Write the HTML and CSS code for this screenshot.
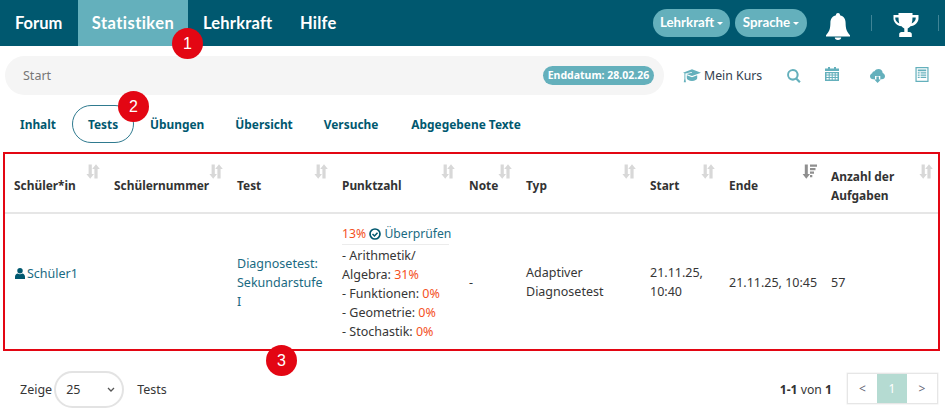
FILE: index.html
```html
<!DOCTYPE html>
<html lang="de">
<head>
<meta charset="utf-8">
<title>Tests</title>
<link rel="stylesheet" href="styles.css">
</head>
<body>
<svg class="defs" aria-hidden="true">
  <symbol id="sort" viewBox="0 0 15 15">
    <path d="M3.600 0.500h3.200v9.500h2.200l-3.800 4.700L1.400 10h2.200z"/>
    <path d="M9.400 5h-2.200l3.800-4.700L14.800 5h-2.200v9.500H9.400z"/>
  </symbol>
  <symbol id="sortdesc" viewBox="0 0 15 15">
    <path d="M2.800 0.500h3v9.500h2.200l-3.700 4.700L0.600 10h2.200z"/>
    <path d="M8 0.500h7v2.200H8zM8 4h5.500v2.200H8zM8 7.500h4v2.200H8zM8 11h2.300v2.200H8z"/>
  </symbol>
</svg>

<nav class="topbar">
  <a class="menu-item menu-first">Forum</a>
  <a class="menu-item active">Statistiken</a>
  <a class="menu-item menu-teacher">Lehrkraft</a>
  <a class="menu-item">Hilfe</a>
  <div class="top-right">
    <span class="pill pill-a">Lehrkraft<i class="caret"></i></span>
    <span class="pill pill-b">Sprache<i class="caret"></i></span>
    <svg class="bell" viewBox="0 0 24 27"><path d="M12 0a2 2 0 0 1 2 2.200c3.800.8 5.600 3.800 5.600 7.800 0 6 1.400 9.200 4.400 12.200v1.300H0v-1.300c3-3 4.400-6.200 4.400-12.200 0-4 1.800-7 5.600-7.800A2 2 0 0 1 12 0z"/><path d="M8.800 24.500h6.400a3.200 2.500 0 0 1-6.400 0z"/></svg>
    <i class="sep sep-a"></i>
    <svg class="trophy" viewBox="0 0 26 24"><path d="M6 0h14v2h6v3.500c0 4-3.800 7.300-8 7.800-.8 1-1.700 1.700-2.800 2.200v3.500H17c1.300 0 2.300 1 2.300 2.200V24H6.700v-2.800c0-1.200 1-2.200 2.300-2.200h2.800v-3.500c-1.100-.5-2-1.200-2.800-2.200-4.200-.5-8-3.800-8-7.800V2H6zM2.800 4.500v1c0 2 1.700 4 4 4.900C6.300 8.800 6 6.800 6 4.500zm20.400 0H20c0 2.300-.3 4.300-.8 5.900 2.300-.9 4-2.900 4-4.900z" transform="translate(-.5 0)"/></svg>
    <i class="sep"></i>
  </div>
</nav>

<div class="subbar">
  <div class="crumb">
    <span class="crumb-text">Start</span>
    <span class="badge">Enddatum: 28.02.26</span>
  </div>
  <div class="tools">
    <svg class="ic-cap" viewBox="0 0 19 14"><path d="M9.500 0L19 3.500 9.500 7 3.500 4.800l6-1.300-.2-.6-6.800 1.500V10l.6 3.500H.8L1.500 10V4.100L0 3.500z"/><path d="M4 6.200l5.500 2 5.500-2v3.300c0 1.500-2.500 2.800-5.500 2.800S4 11 4 9.500z"/></svg>
    <span class="my-course">Mein Kurs</span>
    <svg class="ic-search" viewBox="0 0 14 14"><path d="M5.800 0a5.800 5.800 0 0 1 4.700 9.200l3.200 3.200-1.600 1.600-3.200-3.200A5.800 5.800 0 1 1 5.800 0zm0 2a3.800 3.800 0 1 0 0 7.600 3.800 3.800 0 0 0 0-7.600z"/></svg>
    <svg class="ic-cal" viewBox="0 0 14 14"><path d="M3 0h2v1.500h4V0h2v1.500h3V4H0V1.500h3z"/><path fill-rule="evenodd" d="M0 5h14v9H0zM1.500 6.200v1.400h2.200V6.200zm3.200 0v1.400h2V6.200zm3 0v1.400h2V6.200zm3 0v1.400h1.800V6.200zM1.500 8.600V10h2.200V8.600zm3.200 0V10h2V8.600zm3 0V10h2V8.600zm3 0V10h1.800V8.600zM1.500 11v1.500h2.200V11zm3.200 0v1.500h2V11zm3 0v1.500h2V11zm3 0v1.500h1.800V11z"/></svg>
    <svg class="ic-cloud" viewBox="0 0 15 14"><path d="M8.500 0c2.300 0 4 1.700 4.200 3.900C14 4.400 15 5.600 15 7.200c0 1.800-1.400 3.100-3.200 3.100H10.300V7H5v3.300H3.200C1.400 10.300 0 8.900 0 7.200c0-1.400.9-2.500 2.200-3C2.400 3 3.400 2.200 4.500 2.300 5.300.9 6.800 0 8.500 0z"/><path d="M6.400 7.500h2.500v3h2L7.600 14l-3.300-3.500h2.100z"/></svg>
    <svg class="ic-list" viewBox="0 0 14 16"><path fill-rule="evenodd" d="M0 0h14v16H0zM1.300 1.300v13.400h11.400V1.300zM2.500 2.700h9v1.700h-9zM2.500 5.500h2v1.300h-2zm3 0h6v1.300h-6zM2.500 8h2v1.300h-2zm3 0h6v1.300h-6zm-3 2.500h2v1.300h-2zm3 0h6v1.300h-6z"/></svg>
  </div>
</div>

<div class="tabs">
  <a class="tab">Inhalt</a>
  <a class="tab tab-on">Tests</a>
  <a class="tab">Übungen</a>
  <a class="tab">Übersicht</a>
  <a class="tab">Versuche</a>
  <a class="tab tab-last">Abgegebene Texte</a>
</div>

<div class="box">
  <table class="grid">
    <colgroup>
      <col class="c1"><col class="c2"><col class="c3"><col class="c4"><col class="c5"><col class="c6"><col class="c7"><col class="c8"><col class="c9">
    </colgroup>
    <thead>
      <tr>
        <th>Schüler*in<svg class="sort"><use href="#sort"/></svg></th>
        <th>Schülernummer<svg class="sort"><use href="#sort"/></svg></th>
        <th>Test<svg class="sort"><use href="#sort"/></svg></th>
        <th>Punktzahl<svg class="sort"><use href="#sort"/></svg></th>
        <th>Note<svg class="sort"><use href="#sort"/></svg></th>
        <th>Typ<svg class="sort"><use href="#sort"/></svg></th>
        <th>Start<svg class="sort"><use href="#sort"/></svg></th>
        <th>Ende<svg class="sort sort-on"><use href="#sortdesc"/></svg></th>
        <th>Anzahl der Aufgaben<svg class="sort"><use href="#sort"/></svg></th>
      </tr>
    </thead>
    <tbody>
      <tr>
        <td><div class="student"><svg class="ic-user" viewBox="0 0 11 12"><circle cx="5.500" cy="3" r="3"/><path d="M0 12V9.500C0 7.500 1.500 6 3 6c.7.500 1.600.8 2.500.8S7.300 6.500 8 6c1.500 0 3 1.500 3 3.500V12z"/></svg><a class="link">Schüler1</a></div></td>
        <td></td>
        <td><a class="link">Diagnosetest: Sekundarstufe I</a></td>
        <td>
          <div class="score"><span class="pct">13%</span> <svg class="ic-check" viewBox="0 0 12 12"><circle cx="6" cy="6" r="5" fill="none" stroke="currentColor" stroke-width="1.700"/><path d="M3.500 6l2 2 3-3.300" fill="none" stroke="currentColor" stroke-width="1.500"/></svg> <a class="link">Überprüfen</a></div>
          <div class="parts">- Arithmetik/<br>Algebra: <span class="pct">31%</span><br>- Funktionen: <span class="pct">0%</span><br>- Geometrie: <span class="pct">0%</span><br>- Stochastik: <span class="pct">0%</span></div>
        </td>
        <td>-</td>
        <td>Adaptiver Diagnosetest</td>
        <td>21.11.25, 10:40</td>
        <td class="nowrap">21.11.25, 10:45</td>
        <td>57</td>
      </tr>
    </tbody>
  </table>
</div>

<div class="footer">
  <div class="length">
    <span>Zeige</span>
    <span class="select">25<svg class="chev" viewBox="0 0 8 5"><path d="M1 1l3 3 3-3" fill="none" stroke="currentColor" stroke-width="1.300"/></svg></span>
    <span class="length-unit">Tests</span>
  </div>
  <div class="paging">
    <span class="count"><b>1-1</b> von <b>1</b></span>
    <div class="pages">
      <span class="page page-first">&lt;</span>
      <span class="page page-on">1</span>
      <span class="page">&gt;</span>
    </div>
  </div>
</div>

<span class="mark mark-1">1</span>
<span class="mark mark-2">2</span>
<span class="mark mark-3">3</span>
</body>
</html>
```

FILE: styles.css
```css
* { box-sizing: border-box; }
html, body { margin: 0; padding: 0; }
body {
  width: 945px;
  height: 413px;
  overflow: hidden;
  position: relative;
  background: #fff;
  color: #363636;
  font-family: "Noto Sans", "Open Sans", sans-serif;
  font-size: 12.500px;
  line-height: 19px;
}
.defs { position: absolute; width: 0; height: 0; }

.topbar {
  display: flex;
  height: 46px;
  background: #00586f;
  align-items: stretch;
}
.menu-item {
  display: flex;
  align-items: center;
  padding: 1px 15px 0;
  height: 46px;
  color: #fff;
  font-family: "Lato", sans-serif;
  font-weight: 700;
  font-size: 16.500px;
  letter-spacing: .2px;
}
.menu-first { width: 78px; letter-spacing: 0; }
.menu-teacher { width: 97px; }
.menu-item.active { background: #64b0bc; width: 110px; justify-content: center; padding: 1px 0 0; letter-spacing: .45px; }
.top-right { margin-left: auto; display: flex; align-items: center; padding-right: 6px; }
.pill {
  display: flex;
  align-items: center;
  justify-content: center;
  height: 28px;
  margin-top: -1px;
  background: #64b0bc;
  border-radius: 14px;
  color: #fff;
  font-family: "Lato", sans-serif;
  font-weight: 700;
  font-size: 13.300px;
}
.pill-a { width: 77px; }
.pill-b { width: 72px; margin-left: 5px; }
.caret {
  width: 0; height: 0; margin-left: 3px; margin-top: 2px;
  border-left: 3px solid transparent;
  border-right: 3px solid transparent;
  border-top: 3px solid #fff;
}
.bell { width: 24px; height: 27px; margin-left: 19px; fill: #fff; margin-top: 7px; flex: none; }
.sep { display: block; flex: none; width: 1px; height: 16px; background: #3f8496; }
.sep-a { margin-left: 21px; margin-right: 21px; }
.trophy { width: 26px; height: 24px; fill: #fff; margin-right: 19px; margin-top: 4px; flex: none; }

.subbar { display: flex; align-items: center; margin: 10px 0 0 5px; }
.crumb {
  display: flex;
  align-items: center;
  justify-content: space-between;
  width: 659px;
  height: 39px;
  padding: 0 10px 0 18px;
  background: #f5f5f5;
  border-radius: 20px;
}
.crumb-text { color: #777; font-size: 12.500px; }
.badge {
  display: block;
  width: 111px;
  height: 19px;
  line-height: 19px;
  text-align: center;
  background: #64b0bc;
  border-radius: 10px;
  color: #fff;
  font-weight: 700;
  font-size: 10.500px;
}
.tools { display: flex; align-items: center; margin-left: 19px; fill: #64b0bc; }
.ic-cap { width: 18px; height: 14px; margin-right: 3px; }
.my-course { color: #33414f; font-size: 12.300px; width: 58px; white-space: nowrap; }
.ic-search { width: 14px; height: 14px; margin-left: 25px; }
.ic-cal { width: 14px; height: 14px; margin-left: 24px; margin-top: -3px; }
.ic-cloud { width: 15px; height: 14px; margin-left: 31px; }
.ic-list { width: 14px; height: 15px; margin-left: 30px; margin-top: -2px; }

.tabs { display: flex; align-items: center; height: 38px; margin: 10px 0 9px 5px; }
.tab {
  display: flex;
  align-items: center;
  justify-content: center;
  height: 38px;
  padding: 0 15px;
  color: #00586f;
  font-weight: 700;
  font-size: 11.900px;
  white-space: nowrap;
}
.tab + .tab { margin-left: 1px; }
.tab:first-child { width: 66px; }
.tab-on { width: 62px; padding: 0; border: 1px solid #2f7a8f; border-radius: 19px; }
.tab.tab-last { margin-left: 3px; }

.box { margin-left: 3px; width: 937px; height: 199px; border: 2px solid #e30613; }
.grid { width: 933px; table-layout: fixed; border-collapse: collapse; }
.c1 { width: 100px; } .c2 { width: 123px; } .c3 { width: 105px; }
.c4 { width: 127px; } .c5 { width: 57px; } .c6 { width: 124px; }
.c7 { width: 79px; } .c8 { width: 102px; } .c9 { width: 116px; }
.grid th {
  position: relative;
  height: 59px;
  padding: 5px 9px 0;
  border-bottom: 2px solid #e6e6e6;
  text-align: left;
  color: #333;
  font-weight: 700;
  font-size: 11.900px;
  vertical-align: middle;
}
.grid td { height: 135px; padding: 2px 9px 0; vertical-align: middle; }
.nowrap { white-space: nowrap; }
.sort { position: absolute; top: 10px; right: 5px; width: 15px; height: 15px; fill: #d8d8d8; }
.sort-on { fill: #8f8f8f; }
.link { color: #1a6a82; }
.student { display: flex; align-items: center; height: 38px; padding-bottom: 17px; white-space: nowrap; }
.ic-user { width: 10px; height: 11px; fill: #00586f; margin: 0 2px 0 1px; flex: none; }
.score { white-space: nowrap; width: 107px; padding: 1px 0; border-bottom: 1px solid #ececec; margin-bottom: 1px; font-size: 12.200px; }
.ic-check { width: 12px; height: 12px; color: #00586f; vertical-align: -2px; }
.pct { color: #f4511e; }
.parts { white-space: nowrap; }

.footer { display: flex; justify-content: space-between; align-items: center; margin: 20px 7px 0 20px; height: 37px; }
.length { display: flex; align-items: center; }
.select {
  display: flex;
  align-items: center;
  justify-content: space-between;
  width: 70px;
  height: 37px;
  margin-left: 2px;
  padding: 0 7px 0 10px;
  border: 2px solid #e3e3e3;
  border-radius: 19px;
}
.chev { width: 8px; height: 5px; color: #555; }
.length-unit { margin-left: 13px; }
.paging { display: flex; align-items: center; }
.count { margin-right: 15px; font-size: 12.200px; }
.count b { color: #333; }
.pages { display: flex; height: 31px; border: 1px solid #e6e6e6; margin-top: -3px; box-shadow: 0 0 0 .5px #eee; }
.page {
  display: flex;
  align-items: center;
  justify-content: center;
  width: 30px;
  color: #667;
  font-size: 12px;
}
.page-first { width: 29px; }
.page-on { background: #b5dbd2; color: #fff; }

.mark {
  position: absolute;
  width: 31px;
  height: 31px;
  line-height: 31px;
  text-align: center;
  border-radius: 50%;
  background: #e30613;
  color: #fff;
  font-family: "Liberation Sans", sans-serif;
  font-size: 16px;
}
.mark-1 { left: 172px; top: 28px; }
.mark-2 { left: 118px; top: 91px; }
.mark-3 { left: 266px; top: 345px; }
```
